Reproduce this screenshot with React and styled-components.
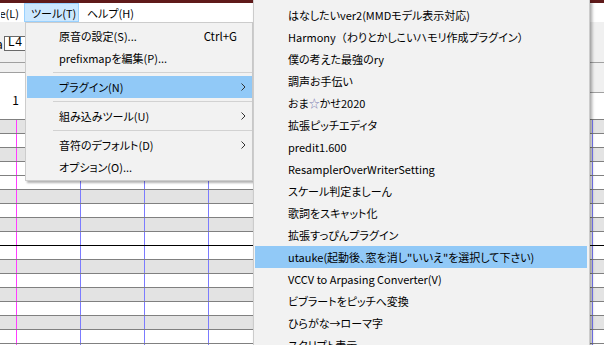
import React from "react";
import styled, { createGlobalStyle, css } from "styled-components";

const Global = createGlobalStyle`
  html, body { margin: 0; padding: 0; background: #fff; overflow: hidden; }
  body { font-family: "Noto Sans CJK JP", "Noto Sans", sans-serif; }
`;

const Window = styled.div`
  position: relative;
  width: 604px;
  height: 345px;
  overflow: hidden;
  display: flex;
  flex-direction: column;
  background: #fff;
  font-size: 11px;
  font-feature-settings: "palt";
  color: #000;
`;

const TitleStrip = styled.div`
  flex: 0 0 3px;
  background: #5f1a1a;
`;

const MenuBar = styled.div`
  flex: 0 0 19px;
  display: flex;
  align-items: stretch;
  background: #fff;
  font-size: 11px;
`;

const MenuBarItem = styled.div`
  display: flex;
  align-items: center;
  box-sizing: border-box;
  padding: 0 7px;
  border: 1px solid transparent;
  white-space: nowrap;
  ${(p) =>
    p.$lead &&
    css`
      width: 24px;
      padding: 0 4px 0 0;
      justify-content: flex-end;
      overflow: hidden;
    `}
  ${(p) =>
    p.$active &&
    css`
      width: 55px;
      padding: 0 6px;
      background: #cce8ff;
      border-color: #99d1ff;
    `}
`;

const Toolbar = styled.div`
  flex: 0 0 40px;
  display: flex;
  align-items: flex-start;
  padding-top: 14px;
  box-sizing: border-box;
  background: #f0f0f0;
`;

const ToolLabel = styled.span`
  margin-left: -4px;
  line-height: 15px;
  font-size: 12px;
`;

const InputBox = styled.div`
  margin-left: 1px;
  width: 60px;
  height: 15px;
  box-sizing: border-box;
  border: 1px solid #6a6a6a;
  background: #fff;
  font-family: "Liberation Mono", monospace;
  font-size: 12px;
  line-height: 13px;
  padding-left: 3px;
`;

const RulerRow = styled.div`
  flex: 0 0 57px;
  display: flex;
`;

const RulerPane = styled.div`
  display: flex;
  flex-direction: column;
  flex: ${(p) => (p.$main ? "1 1 auto" : "0 0 300px")};
  border-top: 1px solid #a0a0a0;
`;

const RulerBand = styled.div`
  flex: 0 0 ${(p) => p.$h}px;
  background: #f0f0f0;
  border-bottom: 1px solid #a0a0a0;
`;

const RulerBody = styled.div`
  flex: 1 1 auto;
  background: #fff;
  display: flex;
  align-items: flex-end;
  padding-bottom: 12px;
  box-sizing: border-box;
`;

const MeasureNo = styled.span`
  width: 19px;
  text-align: right;
  font-size: 12px;
  line-height: 14px;
`;

const Roll = styled.div`
  flex: 1 1 auto;
  display: flex;
  flex-direction: column;
`;

const beatLines = `linear-gradient(to right,
  #ff3cff 0 1px, transparent 1px 64px,
  #7b7bff 64px 65px, transparent 65px 128px,
  #7b7bff 128px 129px, transparent 129px 192px,
  #7b7bff 192px 193px, transparent 193px 256px)`;

const KeyRow = styled.div`
  flex: 0 0 14px;
  box-sizing: border-box;
  border-top: 1px solid ${(p) => (p.$octave ? "#000" : "#808080")};
  background-color: ${(p) => (p.$black ? "#e3e3e3" : "#fff")};
  background-image: ${beatLines};
  background-size: 256px 100%;
  background-position: 16px 0;
  background-repeat: repeat-x;
`;

const Menu = styled.div`
  position: absolute;
  box-sizing: border-box;
  background: #f2f2f2;
  border: 1px solid #cccccc;
  box-shadow: 2px 2px 2px rgba(0, 0, 0, 0.3);
  display: flex;
  flex-direction: column;
`;

const DropMenu = styled(Menu)`
  left: 25px;
  top: 22px;
  width: 228px;
  padding: 2px 0 2px 1px;
`;

const SubMenu = styled(Menu)`
  left: 253px;
  top: 0;
  width: 337px;
  height: 370px;
  border-top: none;
  padding: 4px 2px 0 1px;
  box-shadow: 2px 2px 3px rgba(0, 0, 0, 0.35);
`;

const Item = styled.div`
  flex: 0 0 22px;
  display: flex;
  align-items: center;
  padding: 0 6px 1px ${(p) => p.$indent}px;
  white-space: nowrap;
  box-sizing: border-box;
  background: ${(p) => (p.$hl ? "#91c9f7" : "transparent")};
`;

const ItemText = styled.span`
  flex: 1 1 auto;
`;

const Shortcut = styled.span`
  margin-right: 9px;
  font-size: 11.5px;
`;

const Separator = styled.div`
  flex: 0 0 7px;
  display: flex;
  align-items: center;
  padding-left: 26px;
  &::after {
    content: "";
    flex: 1;
    height: 1px;
    background: #d2d2d2;
  }
`;

const Star = styled.span`
  color: #7d7db0;
`;

const Wide = styled.span`
  font-feature-settings: normal;
`;

const Chevron = () => (
  <svg width="5" height="8" viewBox="0 0 5 8">
    <path d="M0.5 0.5 L4 4 L0.5 7.5" fill="none" stroke="#333" strokeWidth="1" />
  </svg>
);

const rows = [
  ["G#", true], ["G", false], ["F#", true], ["F", false], ["E", false],
  ["D#", true], ["D", false], ["C#", true], ["C", false], ["B", false, true],
  ["A#", true], ["A", false], ["G#", true], ["G", false], ["F#", true],
  ["F", false], ["E", false],
];

const plugins = [
  "はなしたいver2(MMDモデル表示対応)",
  "HARMONY",
  "僕の考えた最強のry",
  "調声お手伝い",
  "STAR",
  "拡張ピッチエディタ",
  "predit1.600",
  "ResamplerOverWriterSetting",
  "スケール判定ましーん",
  "歌詞をスキャット化",
  "拡張すっぴんプラグイン",
  "utauke(起動後、窓を消し\"いいえ\"を選択して下さい)",
  "VCCV to Arpasing Converter(V)",
  "ビブラートをピッチへ変換",
  "ひらがな→ローマ字",
  "スクリプト表示",
];

function renderPlugin(p) {
  if (p === "STAR")
    return (
      <>
        おま<Star>☆</Star>かせ2020
      </>
    );
  if (p === "HARMONY")
    return (
      <>
        Harmony<Wide>（</Wide>わりとかしこいハモリ作成プラグイン<Wide>）</Wide>
      </>
    );
  return p;
}

export default function App() {
  return (
    <>
      <Global />
      <Window>
        <TitleStrip />
        <MenuBar>
          <MenuBarItem $lead>e(L)</MenuBarItem>
          <MenuBarItem $active>ツール(T)</MenuBarItem>
          <MenuBarItem>ヘルプ(H)</MenuBarItem>
        </MenuBar>
        <Toolbar>
          <ToolLabel>a</ToolLabel>
          <InputBox>L4</InputBox>
        </Toolbar>
        <RulerRow>
          <RulerPane>
            <RulerBand $h={9} />
            <RulerBody>
              <MeasureNo>1</MeasureNo>
            </RulerBody>
          </RulerPane>
          <RulerPane $main>
            <RulerBand $h={29} />
            <RulerBody />
          </RulerPane>
        </RulerRow>
        <Roll>
          {rows.map(([k, black, oct], i) => (
            <KeyRow key={i} $black={black} $octave={oct} />
          ))}
        </Roll>

        <DropMenu>
          <Item $indent={32}>
            <ItemText>原音の設定(S)...</ItemText>
            <Shortcut>Ctrl+G</Shortcut>
          </Item>
          <Item $indent={32}>
            <ItemText>prefixmapを編集(P)...</ItemText>
          </Item>
          <Separator />
          <Item $indent={32} $hl>
            <ItemText>プラグイン(N)</ItemText>
            <Chevron />
          </Item>
          <Separator />
          <Item $indent={32}>
            <ItemText>組み込みツール(U)</ItemText>
            <Chevron />
          </Item>
          <Separator />
          <Item $indent={32}>
            <ItemText>音符のデフォルト(D)</ItemText>
            <Chevron />
          </Item>
          <Item $indent={32}>
            <ItemText>オプション(O)...</ItemText>
          </Item>
        </DropMenu>

        <SubMenu>
          {plugins.map((p, i) => (
            <Item key={i} $indent={33} $hl={i === 11}>
              <ItemText>{renderPlugin(p)}</ItemText>
            </Item>
          ))}
        </SubMenu>
      </Window>
    </>
  );
}
